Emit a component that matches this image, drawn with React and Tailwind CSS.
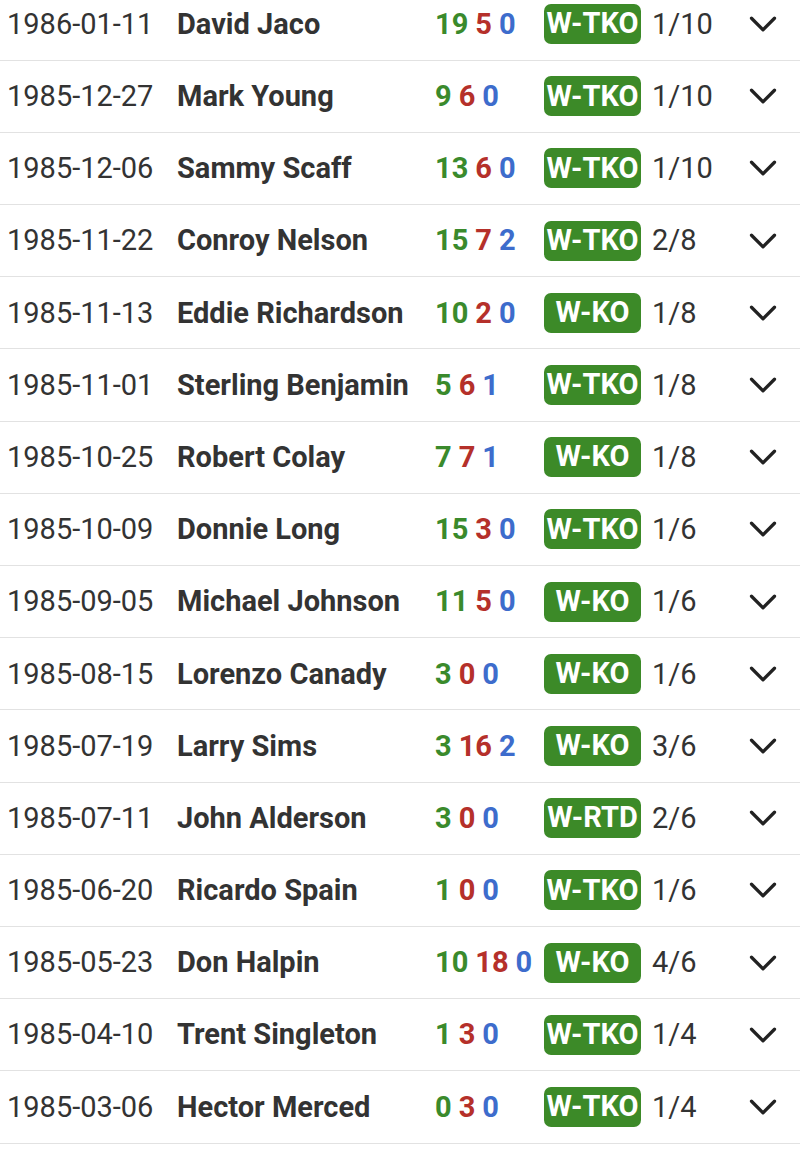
import { ChevronDown } from 'lucide-react';

const fights = [
  ['1986-01-11', 'David Jaco', 19, 5, 0, 'W-TKO', '1/10'],
  ['1985-12-27', 'Mark Young', 9, 6, 0, 'W-TKO', '1/10'],
  ['1985-12-06', 'Sammy Scaff', 13, 6, 0, 'W-TKO', '1/10'],
  ['1985-11-22', 'Conroy Nelson', 15, 7, 2, 'W-TKO', '2/8'],
  ['1985-11-13', 'Eddie Richardson', 10, 2, 0, 'W-KO', '1/8'],
  ['1985-11-01', 'Sterling Benjamin', 5, 6, 1, 'W-TKO', '1/8'],
  ['1985-10-25', 'Robert Colay', 7, 7, 1, 'W-KO', '1/8'],
  ['1985-10-09', 'Donnie Long', 15, 3, 0, 'W-TKO', '1/6'],
  ['1985-09-05', 'Michael Johnson', 11, 5, 0, 'W-KO', '1/6'],
  ['1985-08-15', 'Lorenzo Canady', 3, 0, 0, 'W-KO', '1/6'],
  ['1985-07-19', 'Larry Sims', 3, 16, 2, 'W-KO', '3/6'],
  ['1985-07-11', 'John Alderson', 3, 0, 0, 'W-RTD', '2/6'],
  ['1985-06-20', 'Ricardo Spain', 1, 0, 0, 'W-TKO', '1/6'],
  ['1985-05-23', 'Don Halpin', 10, 18, 0, 'W-KO', '4/6'],
  ['1985-04-10', 'Trent Singleton', 1, 3, 0, 'W-TKO', '1/4'],
  ['1985-03-06', 'Hector Merced', 0, 3, 0, 'W-TKO', '1/4'],
];

const FightRow = ({ date, name, w, l, d, result, round }) => (
  <div className="flex items-center h-[72.2px] border-b border-[#e2e2e2] text-[29px] text-[#333]">
    <div className="w-[177px] pl-[7px] pt-[1px]">{date}</div>
    <div className="w-[258px] pt-[1px] font-bold whitespace-nowrap">{name}</div>
    <div className="w-[109px] pt-[1px] font-bold flex gap-[7px] whitespace-nowrap">
      <span className="text-[#3a8a2c]">{w}</span>
      <span className="text-[#b5302a]">{l}</span>
      <span className="text-[#3d6ccc]">{d}</span>
    </div>
    <div className="w-[97px] h-[40px] rounded-[7px] bg-[#3c8a28] text-white font-bold flex items-center justify-center">
      {result}
    </div>
    <div className="ml-[11px] pt-[1px] flex-1">{round}</div>
    <ChevronDown size={46} strokeWidth={1.7} className="mr-[14px] text-[#222]" />
  </div>
);

export default function App() {
  return (
    <div className="w-[800px] h-[1149px] overflow-hidden bg-white" style={{ fontFamily: 'Roboto, sans-serif' }}>
      <div className="-mt-[11.5px]">
        {fights.map(([date, name, w, l, d, result, round]) => (
          <FightRow key={date} date={date} name={name} w={w} l={l} d={d} result={result} round={round} />
        ))}
      </div>
    </div>
  );
}
